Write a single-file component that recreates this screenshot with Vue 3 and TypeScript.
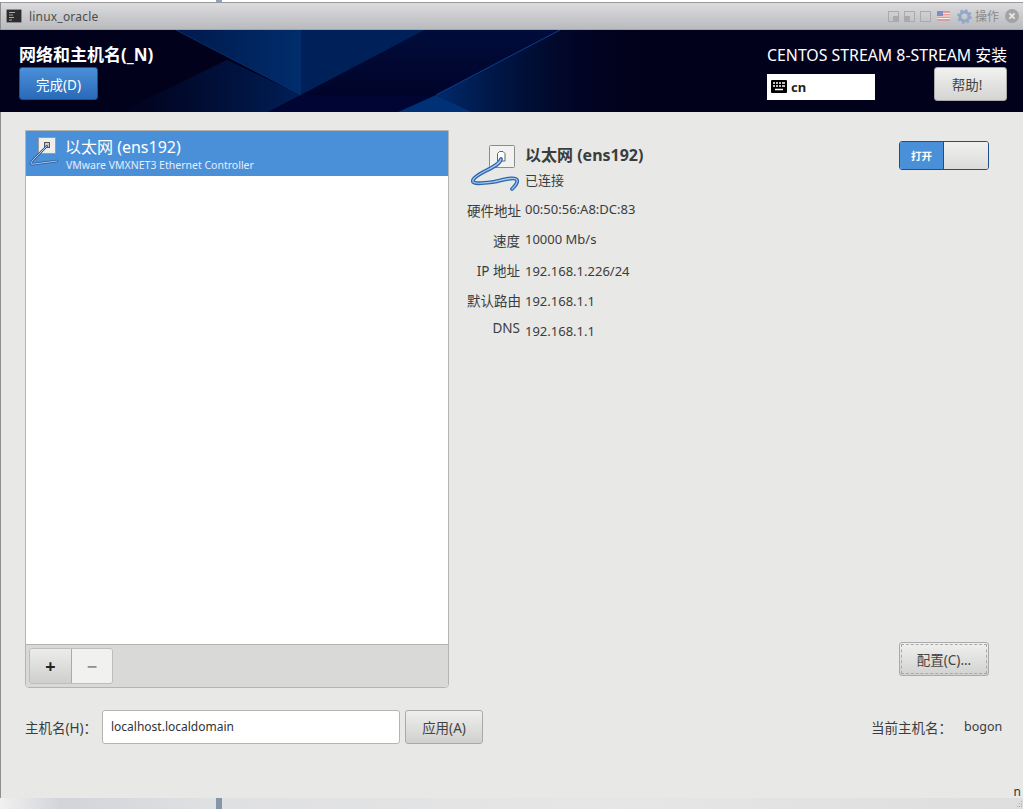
<script setup lang="ts">
interface Row { label: string; value: string; labelUp?: boolean; valueUp?: boolean }
const rows: Row[] = [
  { label: '硬件地址', value: '00:50:56:A8:DC:83', valueUp: true },
  { label: '速度', value: '10000 Mb/s', valueUp: true },
  { label: 'IP 地址', value: '192.168.1.226/24' },
  { label: '默认路由', value: '192.168.1.1' },
  { label: 'DNS', value: '192.168.1.1', labelUp: true },
]
</script>

<template>
  <div class="desk">
    <div class="topstrip"><span class="tick"></span></div>
    <div class="window">
      <div class="titlebar">
        <svg class="termicon" width="16" height="14" viewBox="0 0 16 14">
          <rect x="0.5" y="0.5" width="15" height="13" rx="1" fill="#2c2c2c" stroke="#8a8a8a" />
          <path d="M3 3.500h6M3 6h4M3 8.500h5M3 11h3" stroke="#aaa" stroke-width="1" />
        </svg>
        <span class="wintitle">linux_oracle</span>
        <div class="tools">
          <svg width="11" height="11" viewBox="0 0 11 11"><rect x="0.5" y="0.5" width="10" height="10" fill="none" stroke="#aaa" /><rect x="5" y="5" width="5" height="5" fill="#aaa" /></svg>
          <svg width="11" height="11" viewBox="0 0 11 11"><rect x="0.5" y="0.5" width="10" height="10" fill="none" stroke="#aaa" /><rect x="1" y="5" width="5" height="5" fill="#aaa" /></svg>
          <svg width="11" height="11" viewBox="0 0 11 11"><rect x="0.5" y="0.5" width="10" height="10" fill="none" stroke="#aaa" /></svg>
          <svg class="flag" width="13" height="10" viewBox="0 0 13 10"><rect width="13" height="10" fill="#e09c9c" /><path d="M0 2.500h13M0 5h13M0 7.500h13" stroke="#eee" stroke-width="1" /><rect width="6" height="5" fill="#7f8fbf" /></svg>
          <svg class="gear" width="15" height="15" viewBox="0 0 15 15"><circle cx="7.500" cy="7.500" r="4.500" fill="none" stroke="#8fa9c6" stroke-width="3" /><circle cx="7.500" cy="7.500" r="6.400" fill="none" stroke="#8fa9c6" stroke-width="2" stroke-dasharray="2.400 2.600" /></svg>
          <span class="optext">操作</span>
          <svg width="14" height="14" viewBox="0 0 14 14"><circle cx="7" cy="7" r="7" fill="#a3a3a3" /><path d="M4.400 4.400l5.200 5.200M9.600 4.400l-5.200 5.200" stroke="#e8e8e8" stroke-width="1.800" /></svg>
        </div>
      </div>

      <header class="header">
        <svg class="art" width="1023" height="82" viewBox="0 0 1023 82">
          <defs>
            <linearGradient id="hLeft" x1="0" y1="0" x2="1" y2="0">
              <stop offset="0" stop-color="#00194c" />
              <stop offset="1" stop-color="#002d6c" />
            </linearGradient>
            <linearGradient id="hLow" x1="0" y1="0" x2="1" y2="0">
              <stop offset="0" stop-color="#00184a" stop-opacity="0" />
              <stop offset="1" stop-color="#001f57" />
            </linearGradient>
            <linearGradient id="hGlow" gradientUnits="userSpaceOnUse" x1="440" y1="0" x2="650" y2="0">
              <stop offset="0" stop-color="#00296a" />
              <stop offset="1" stop-color="#01011c" stop-opacity="0" />
            </linearGradient>
            <linearGradient id="hDark" x1="0" y1="0" x2="0" y2="1">
              <stop offset="0" stop-color="#010c3a" />
              <stop offset="1" stop-color="#00042a" />
            </linearGradient>
          </defs>
          <polygon points="120,82 227,30 301,65 268,82" fill="url(#hLow)" />
          <polygon points="176,0 301,0 301,65" fill="url(#hLeft)" />
          <polygon points="301,0 425,0 301,65" fill="#00205a" />
          <polygon points="301,65 425,0 560,0 436,65" fill="url(#hDark)" />
          <polygon points="268,82 301,65 436,65 398,82" fill="#000533" />
          <polygon points="436,65 560,0 660,0 660,82 472,82" fill="url(#hGlow)" />
          <polygon points="436,65 398,82 472,82" fill="#003177" />
          <line x1="436" y1="65" x2="560" y2="0" stroke="#0a3f8f" stroke-width="1" />
          <line x1="176" y1="0" x2="301" y2="65" stroke="#06306f" stroke-width="1" />
        </svg>
        <div class="head-left">
          <div class="head-title">网络和主机名(_N)</div>
          <button class="btn-done">完成(D)</button>
        </div>
        <div class="head-right">
          <div class="head-product">CENTOS STREAM 8-STREAM 安装</div>
          <div class="head-row">
            <div class="kbd">
              <svg width="16" height="13" viewBox="0 0 16 13">
                <rect width="16" height="13" rx="1" fill="#000" />
                <path d="M2 3h2M5 3h2M8 3h2M11 3h3M2 6h2M5 6h2M8 6h2M11 6h3M4 9.500h8" stroke="#fff" stroke-width="1.500" />
              </svg>
              <span>cn</span>
            </div>
            <button class="btn-help">帮助!</button>
          </div>
        </div>
      </header>

      <main class="main">
        <div class="top">
          <section class="listbox">
            <div class="listitem">
              <svg class="cable-s" width="32" height="32" viewBox="0 0 32 32">
                <rect x="9.500" y="0.500" width="17" height="16" fill="#eeeeec" stroke="#9a9a9a" />
                <rect x="15.500" y="5.500" width="5" height="5" fill="#ccc" stroke="#555" />
                <path d="M18 9L3 24Q0 28 5 27L28 24" fill="none" stroke="#2b5c9e" stroke-width="2.400" stroke-linecap="round" />
                <path d="M18 9L3 24Q0 28 5 27L28 24" fill="none" stroke="#bcd3ef" stroke-width="0.900" stroke-linecap="round" />
              </svg>
              <div class="itemtext">
                <div class="itemname">以太网 (ens192)</div>
                <div class="itemsub">VMware VMXNET3 Ethernet Controller</div>
              </div>
            </div>
            <div class="listspace"></div>
            <div class="listbar">
              <div class="pm">
                <button class="pm-add">+</button>
                <button class="pm-del">−</button>
              </div>
            </div>
          </section>

          <section class="detail">
            <div class="dev-head">
              <svg class="cable-l" width="50" height="48" viewBox="0 0 50 48">
                <rect x="18.500" y="1.500" width="25" height="22" rx="1" fill="#f2f2f0" stroke="#8c8c8c" />
                <path d="M26.500 17V9.500l2-2h3.500l2 2V17z" fill="#fff" stroke="#666" />
                <path d="M30 15C28 24 6 28 2 36C0 41 14 39 22 38C32 36 44 32 46 36C47 39 44 42 41 45" fill="none" stroke="#2d66ad" stroke-width="3.800" stroke-linecap="round" />
                <path d="M30 15C28 24 6 28 2 36C0 41 14 39 22 38C32 36 44 32 46 36C47 39 44 42 41 45" fill="none" stroke="#a9c8ec" stroke-width="1.200" stroke-linecap="round" />
              </svg>
              <div class="dev-text">
                <div class="dev-name">以太网 (ens192)</div>
                <div class="dev-state">已连接</div>
              </div>
              <div class="switch">
                <span class="sw-on">打开</span>
                <span class="sw-knob"></span>
              </div>
            </div>
            <div class="props">
              <div v-for="r in rows" :key="r.label" class="prop">
                <span class="prop-l" :class="{ up3: r.labelUp }">{{ r.label }}</span>
                <span class="prop-v" :class="{ up2: r.valueUp }">{{ r.value }}</span>
              </div>
            </div>
            <div class="cfgwrap">
              <button class="btn-cfg"><span class="cfg-inner">配置(C)...</span></button>
            </div>
          </section>
        </div>

        <div class="hostrow">
          <span class="host-l">主机名(H)：</span>
          <div class="host-input">localhost.localdomain</div>
          <button class="btn-apply">应用(A)</button>
          <span class="host-cur">当前主机名：</span>
          <span class="host-val">bogon</span>
        </div>
        <div class="stray">n</div>
      </main>
    </div>
    <div class="bottomstrip">
      <span class="tick2"></span>
      <svg class="grip" width="7" height="8" viewBox="0 0 7 8"><path d="M5 1h1v1H5zM3 3h1v1H3zM5 4h1v1H5zM1 6h1v1H1zM3 6h1v1H3zM5 6h1v1H5z" fill="#a8a8a8" /></svg>
    </div>
  </div>
</template>

<style>
html, body { margin: 0; background: #e8e8e7; overflow: hidden; }
</style>

<style scoped>
* { box-sizing: border-box; }
.desk {
  width: 1023px; height: 809px; display: flex; flex-direction: column;
  font-family: "Noto Sans", "Noto Sans CJK SC", sans-serif; color: #3a3d3d; overflow: hidden;
  background: #e8e8e7;
}
.topstrip { height: 2px; background: #fff; position: relative; flex: none; }
.tick { position: absolute; left: 216px; top: 0; width: 6px; height: 2px; background: #8fa3bd; }
.window { flex: 1; display: flex; flex-direction: column; border-left: 1px solid #8e8e8e; min-height: 0; }
.titlebar {
  height: 28px; flex: none; display: flex; align-items: center; padding: 0 4px 0 5px;
  background: linear-gradient(#dcdcdf, #b9babd); border-top: 1px solid #9a9a9a; border-bottom: 1px solid #a6a6a6;
}
.termicon { margin-right: 7px; }
.wintitle { font-size: 12px; color: #4d4d4d; letter-spacing: 0.2px; }
.tools { margin-left: auto; display: flex; align-items: center; gap: 5px; }
.flag { margin-left: 1px; }
.gear { margin-left: 2px; margin-right: -2px; }
.optext { font-size: 12px; color: #8a8a8a; margin-right: 1px; }
.header {
  position: relative; height: 82px; flex: none; background: #01011c; display: flex; justify-content: space-between; color: #fff;
  margin-left: -1px;
}
.art { position: absolute; left: 0; top: 0; }
.head-left { position: relative; padding: 13px 0 0 19px; }
.head-title { font-size: 17px; font-weight: 700; line-height: 24px; }
.btn-done {
  display: block; width: 79px; height: 33px; border: 1px solid #1b4f92; border-radius: 3px; color: #fff;
  background: linear-gradient(#4a90d9, #2a6ab8); font: inherit; font-size: 13.500px; padding: 0;
}
.head-right { position: relative; width: 256px; padding: 13px 16px 0 0; }
.head-product { font-size: 15.850px; line-height: 24px; white-space: nowrap; text-align: right; }
.head-row { display: flex; justify-content: space-between; align-items: flex-start; }
.kbd {
  width: 108px; height: 26px; margin-top: 7px; background: #fff; color: #222; display: flex; align-items: center; gap: 4px;
  padding: 0 0 1px 4px; font-size: 13px; font-weight: 700;
}
.btn-help {
  width: 73px; height: 34px; border: 1px solid #aaa; border-radius: 3px; background: linear-gradient(#f2f2f1, #d4d4d2);
  color: #444; font: inherit; font-size: 13.500px; padding: 0 7px 0 0;
}
.main { position: relative; flex: 1; padding: 18px 0 0 24px; min-height: 0; }
.top { display: flex; height: 558px; margin-right: 34px; }
.listbox {
  width: 424px; display: flex; flex-direction: column; border: 1px solid #b4b4b1; border-radius: 0 0 4px 4px; background: #fff;
  overflow: hidden;
}
.listitem { height: 45px; background: #4a90d9; color: #fff; display: flex; padding: 5px 0 0 3px; flex: none; }
.cable-s { margin-top: 1px; }
.itemtext { margin-left: 4px; }
.itemname { font-size: 16px; line-height: 22px; }
.itemsub { font-size: 10.500px; line-height: 14px; color: #e4eefa; white-space: nowrap; padding-left: 1px; }
.listspace { flex: 1; }
.listbar { height: 43px; flex: none; background: #d9d9d7; border-top: 1px solid #b4b4b1; padding: 3px 0 0 3px; }
.pm { display: flex; width: 84px; height: 36px; border: 1px solid #bdbdba; border-radius: 3px; overflow: hidden; }
.pm button { border: 0; padding: 0; font: inherit; font-size: 18px; }
.pm .pm-add { width: 42px; background: linear-gradient(#ececeb, #cfcfcd); color: #222; font-weight: 700; border-right: 1px solid #aaa; }
.pm .pm-del { flex: 1; background: #f1f1f0; color: #8f8f8f; font-weight: 700; }
.detail { flex: 1; display: flex; flex-direction: column; padding: 11px 0 0 18px; min-width: 0; }
.dev-head { display: flex; height: 54px; flex: none; }
.cable-l { margin: 3px 0 0 4px; flex: none; }
.dev-text { margin-left: 4px; padding-top: 1px; }
.dev-name { font-size: 16px; font-weight: 700; line-height: 26px; }
.dev-state { font-size: 13px; line-height: 25px; }
.switch {
  margin-left: auto; width: 90px; height: 29px; display: flex; border: 1px solid #1f4f8b; border-radius: 3px; overflow: hidden; flex: none;
}
.sw-on { width: 43px; background: #4a90d9; color: #fff; font-size: 10.500px; font-weight: 700; display: flex; align-items: center; justify-content: center; }
.sw-knob { flex: 1; background: linear-gradient(#f0f0ef, #dcdcda); border-left: 1px solid #1f4f8b; }
.props { margin-top: 1px; font-size: 13px; }
.prop { display: flex; height: 30px; align-items: center; }
.prop-l { width: 53px; text-align: right; white-space: nowrap; flex: none; font-size: 13.500px; transform: translateY(-1px); }
.prop-l.up3 { transform: translateY(-3px); }
.prop-v { margin-left: 5px; font-size: 13px; }
.up2 { transform: translateY(-2px); }
.cfgwrap { margin-top: auto; display: flex; justify-content: flex-end; margin-bottom: 12px; }
.btn-cfg {
  width: 90px; height: 34px; border: 1px solid #aaa; border-radius: 3px; background: linear-gradient(#f0f0ef, #d2d2d0);
  font: inherit; color: #444; padding: 1px;
}
.cfg-inner { display: flex; align-items: center; justify-content: center; height: 100%; border: 1px dashed #a8a8a8; font-size: 13.500px; }
.hostrow { display: flex; align-items: center; margin-top: 22px; height: 34px; font-size: 13.500px; }
.host-l { width: 77px; flex: none; white-space: nowrap; }
.host-input {
  width: 298px; height: 34px; background: #fff; border: 1px solid #b4b4b1; border-radius: 3px; display: flex; align-items: center;
  padding: 0 0 2px 8px; font-size: 12px; color: #2e3436; flex: none;
}
.btn-apply {
  width: 78px; height: 34px; margin-left: 5px; flex: none; border: 1px solid #aaa; border-radius: 3px;
  background: linear-gradient(#efefee, #d0d0ce); font: inherit; font-size: 13.500px; color: #444; padding: 0;
}
.host-cur { margin-left: 388px; width: 93px; flex: none; white-space: nowrap; }
.host-val { font-size: 12.500px; white-space: nowrap; padding-bottom: 2px; }
.stray { position: absolute; right: 2px; bottom: 0; font-size: 12px; line-height: 12px; color: #333; }
.bottomstrip {
  height: 11px; flex: none; position: relative;
  background: linear-gradient(90deg, #f0f0f0, #d2d4da 6%, #dfe0e2 20%, #e6e6e6 60%, #dedede);
}
.tick2 { position: absolute; left: 216px; top: 0; width: 6px; height: 11px; background: #8795ab; }
.grip { position: absolute; right: 0; bottom: 1px; }
</style>
